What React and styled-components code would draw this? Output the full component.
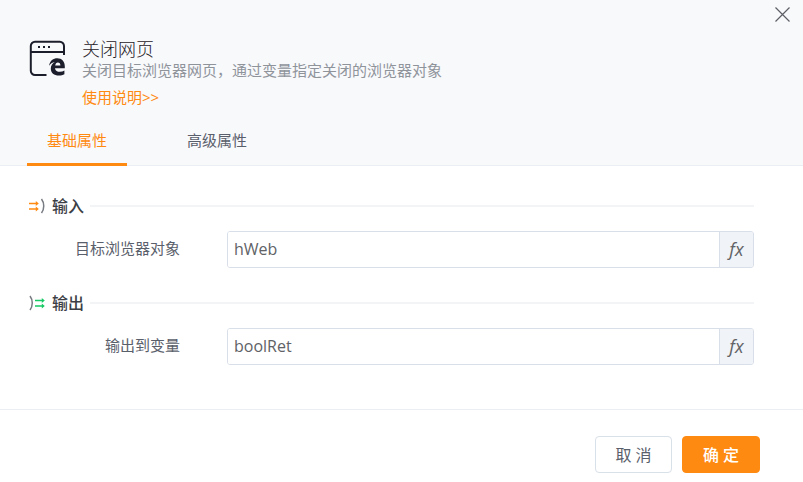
import React, { useState } from "react";
import styled, { createGlobalStyle } from "styled-components";

const palette = {
  accent: "#ff8a12",
  green: "#17c964",
  header: "#f8f9fb",
  line: "#ebeef2",
  border: "#d9dfe9",
  text: "#5a606b",
  heading: "#3c3e46",
  muted: "#8f949b",
};

const GlobalStyle = createGlobalStyle`
  *,
  *::before,
  *::after {
    box-sizing: border-box;
  }

  body {
    margin: 0;
    background: #fff;
    color: ${palette.text};
    font-family: "Open Sans", "Noto Sans CJK SC", sans-serif;
    font-size: 15px;
  }

  button,
  input {
    font: inherit;
  }
`;

const Header = styled.header`
  position: relative;
  background: ${palette.header};
  border-bottom: 1px solid ${palette.line};
  padding: 40px 28px 0;
`;

const CloseButton = styled.button`
  position: absolute;
  top: 6px;
  right: 12px;
  display: flex;
  padding: 0;
  border: 0;
  background: none;
  cursor: pointer;
`;

const Intro = styled.div`
  display: flex;
  gap: 16px;
`;

const Title = styled.h1`
  margin: 0;
  color: #1f2127;
  font-family: "Liberation Sans", "Noto Sans CJK SC", sans-serif;
  font-size: 18px;
  font-weight: 300;
  line-height: 20px;
`;

const Description = styled.p`
  margin: 0;
  color: ${palette.muted};
  font-family: "Liberation Sans", "Noto Sans CJK SC", sans-serif;
  line-height: 22px;
`;

const HelpLink = styled.a`
  display: block;
  margin-top: 3px;
  color: ${palette.accent};
  line-height: 24px;
  text-decoration: none;
`;

const Tabs = styled.div`
  display: flex;
  gap: 40px;
  margin: 11px 0 -1px -1px;
`;

const Tab = styled.button`
  height: 46px;
  padding: 0 20px 4px;
  border: 0;
  border-bottom: 3px solid
    ${({ $active }) => ($active ? palette.accent : "transparent")};
  background: none;
  color: ${({ $active }) => ($active ? palette.accent : palette.text)};
  cursor: pointer;
`;

const Form = styled.main`
  padding: 28px 49px 44px 28px;
`;

const Section = styled.section`
  & + & {
    margin-top: 23px;
  }
`;

const SectionTitle = styled.h2`
  display: flex;
  align-items: center;
  margin: 0 0 13px;
  color: ${palette.heading};
  font-size: 16px;
  font-weight: 500;
  line-height: 24px;

  svg {
    margin-right: 6px;
  }

  &::after {
    content: "";
    flex: 1;
    height: 2px;
    margin-left: 6px;
    background: #f3f4f6;
  }
`;

const Field = styled.div`
  display: flex;
  align-items: center;
  gap: 47px;
`;

const Label = styled.label`
  width: 152px;
  padding-bottom: 4px;
  text-align: right;
`;

const InputGroup = styled.div`
  display: flex;
  flex: 1;
  height: 37px;
  border: 1px solid ${palette.border};
  border-radius: 3px;
  overflow: hidden;
`;

const TextInput = styled.input`
  flex: 1;
  min-width: 0;
  padding: 0 6px 2px;
  border: 0;
  outline: 0;
  color: #606266;
  font-size: 16px;
`;

const FxButton = styled.button`
  width: 34px;
  padding: 0 0 2px;
  border: 0;
  border-left: 1px solid ${palette.border};
  background: #f0f3f7;
  color: #606266;
  font-size: 18px;
  font-style: italic;
  cursor: pointer;
`;

const Footer = styled.footer`
  display: flex;
  justify-content: flex-end;
  gap: 10px;
  padding: 26px 43px 10px;
  border-top: 1px solid ${palette.line};
`;

const Button = styled.button`
  width: ${({ $primary }) => ($primary ? "78px" : "77px")};
  height: 37px;
  padding: 0 0 2px;
  border: 1px solid ${({ $primary }) => ($primary ? palette.accent : "#d8e0e8")};
  border-radius: 4px;
  background: ${({ $primary }) => ($primary ? palette.accent : "#fff")};
  color: ${({ $primary }) => ($primary ? "#fff" : palette.text)};
  font-size: 16px;
  font-weight: ${({ $primary }) => ($primary ? 500 : 400)};
  cursor: pointer;
`;

const CloseIcon = () => (
  <svg width="17" height="17" viewBox="0 0 17 17" stroke="#5c5f66" strokeWidth="1.2" aria-hidden="true">
    <path d="M1.5 1.5l14 14M15.5 1.5l-14 14" />
  </svg>
);

const BrowserIcon = () => (
  <svg width="38" height="38" viewBox="0 0 38 38" fill="none" aria-hidden="true">
    <path
      d="M18.500 35H7a4.200 4.200 0 0 1-4.200-4.200V6A4.200 4.200 0 0 1 7 1.800h24.800A4.200 4.200 0 0 1 36 6v9M2.800 12H36"
      stroke="#1c1e2b"
      strokeWidth="2"
    />
    <g fill="#1c1e2b">
      <rect x="10" y="6" width="2" height="2" />
      <rect x="15" y="6" width="2" height="2" />
      <rect x="20" y="6" width="2" height="2" />
    </g>
    <path
      d="M21 25.800c1-5.300 4.300-7.600 8.200-7.600 4.700 0 7.600 3.300 7.600 8.100v1.900H27c.3 2.600 2.300 3.600 4.900 3.600 1.700 0 3.200-.4 4.500-1.200v3.700c-1.500.8-3.400 1.200-5.400 1.200-5 0-8.200-2.800-8.200-7.100 0-2.900 1.500-5.200 4-6.500-2.500.5-4.500 1.800-5.800 3.900zm6.200-.3h5.200c0-2-.9-3.100-2.500-3.100-1.500 0-2.400 1.200-2.700 3.100z"
      fill="#1c1e2b"
    />
  </svg>
);

const Arrows = ({ x, color }) => (
  <g transform={`translate(${x} 0)`}>
    <path d="M0 6.500h8M0 12h8" stroke={color} strokeWidth="1.500" />
    <path d="M6.800 4l3 2.500-3 2.500zM6.800 9.500l3 2.500-3 2.500z" fill={color} />
  </g>
);

const InputIcon = () => (
  <svg width="18" height="18" viewBox="0 0 18 18" fill="none" aria-hidden="true">
    <Arrows x={1} color={palette.accent} />
    <path d="M13.500 2c3 4 3 10 0 14" stroke="#777b82" strokeWidth="1.500" />
  </svg>
);

const OutputIcon = () => (
  <svg width="18" height="18" viewBox="0 0 18 18" fill="none" aria-hidden="true">
    <path d="M2 2c3 4 3 10 0 14" stroke="#777b82" strokeWidth="1.500" />
    <Arrows x={7} color={palette.green} />
  </svg>
);

function VariableField({ id, label, initial }) {
  const [value, setValue] = useState(initial);

  return (
    <Field>
      <Label htmlFor={id}>{label}</Label>
      <InputGroup>
        <TextInput id={id} value={value} onChange={(e) => setValue(e.target.value)} />
        <FxButton type="button">fx</FxButton>
      </InputGroup>
    </Field>
  );
}

export default function App() {
  const [tab, setTab] = useState("基础属性");

  return (
    <>
      <GlobalStyle />
      <Header>
        <CloseButton type="button" aria-label="关闭">
          <CloseIcon />
        </CloseButton>
        <Intro>
          <BrowserIcon />
          <div>
            <Title>关闭网页</Title>
            <Description>关闭目标浏览器网页，通过变量指定关闭的浏览器对象</Description>
            <HelpLink href="#help">使用说明&gt;&gt;</HelpLink>
          </div>
        </Intro>
        <Tabs role="tablist">
          {["基础属性", "高级属性"].map((name) => (
            <Tab
              key={name}
              type="button"
              role="tab"
              aria-selected={tab === name}
              $active={tab === name}
              onClick={() => setTab(name)}
            >
              {name}
            </Tab>
          ))}
        </Tabs>
      </Header>
      <Form>
        <Section>
          <SectionTitle>
            <InputIcon />
            输入
          </SectionTitle>
          <VariableField id="target" label="目标浏览器对象" initial="hWeb" />
        </Section>
        <Section>
          <SectionTitle>
            <OutputIcon />
            输出
          </SectionTitle>
          <VariableField id="result" label="输出到变量" initial="boolRet" />
        </Section>
      </Form>
      <Footer>
        <Button type="button">取 消</Button>
        <Button type="button" $primary>确 定</Button>
      </Footer>
    </>
  );
}
